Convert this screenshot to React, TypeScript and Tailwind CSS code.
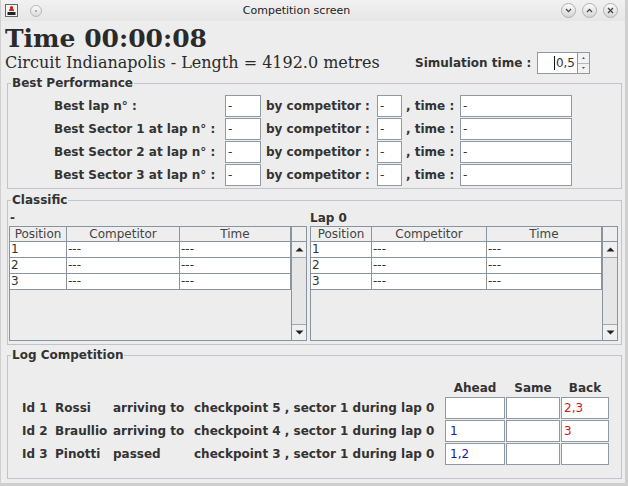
import React from "react";

function TitleBtn({ children }: { children: React.ReactNode }) {
  return (
    <div className="w-[15px] h-[15px] rounded-full border border-[#b0b0b0] bg-gradient-to-b from-[#fbfbfb] to-[#d6d6d6] flex items-center justify-center">
      {children}
    </div>
  );
}

function Field({ w, text, cls = "" }: { w: string; text?: string; cls?: string }) {
  return (
    <div className={`${w} h-[22px] bg-white border border-[#8f9aa5] flex items-center pl-[2px] text-[12px] ${cls}`}>
      {text}
    </div>
  );
}

function Group({ title, className = "", children }: { title: string; className?: string; children: React.ReactNode }) {
  return (
    <fieldset className={`border border-[#bfc5cb] ${className}`}>
      <legend className="ml-[3px] px-[1px] text-[12px] font-bold leading-[14px] text-[#333]">{title}</legend>
      {children}
    </fieldset>
  );
}

function Arrow({ up }: { up?: boolean }) {
  return (
    <svg width="9" height="5" viewBox="0 0 9 5">
      {up ? <path d="M0.5 4.5 L4.5 0.5 L8.5 4.5 Z" fill="#222" /> : <path d="M0.5 0.5 L4.5 4.5 L8.5 0.5 Z" fill="#222" />}
    </svg>
  );
}

function Pane({ cols, width }: { cols: number[]; width: string }) {
  const heads = ["Position", "Competitor", "Time"];
  const rows = [["1", "---", "---"], ["2", "---", "---"], ["3", "---", "---"]];
  return (
    <div className={`${width} h-[115px] border border-[#8a949e] flex`}>
      <div className="flex-1 flex flex-col">
        <div className="flex h-[15px] border-b border-[#8a949e] bg-[#eeeeee]">
          {heads.map((h, i) => (
            <div
              key={h}
              style={{ width: cols[i] }}
              className="h-full border-r border-[#8a949e] text-center text-[12px] leading-[14px] text-[#444]"
            >
              {h}
            </div>
          ))}
        </div>
        {rows.map((r) => (
          <div key={r[0]} className="flex h-[16px] border-b border-[#8a949e] bg-white">
            {r.map((c, i) => (
              <div
                key={i}
                style={{ width: cols[i] }}
                className="h-full border-r border-[#8a949e] pl-[1px] text-[12px] leading-[15px] text-[#333]"
              >
                {c}
              </div>
            ))}
          </div>
        ))}
      </div>
      <div className="w-[15px] flex flex-col border-l border-[#8a949e]">
        <div className="h-[15px] border-b border-[#8a949e] bg-[#eeeeee]" />
        <div className="h-[16px] border-b border-[#a0a8b0] bg-[#f0f0f0] flex items-center justify-center">
          <Arrow up />
        </div>
        <div className="flex-1 bg-[#e6e6e6]" />
        <div className="h-[16px] border-t border-[#a0a8b0] bg-[#f0f0f0] flex items-center justify-center">
          <Arrow />
        </div>
      </div>
    </div>
  );
}

function LogRow({ id, name, action, cp, ahead, same, back }: { id: string; name: string; action: string; cp: string; ahead: string; same: string; back: string }) {
  return (
    <div className="flex items-center h-[22px] pl-[14px] text-[12px] font-bold text-[#333]">
      <span className="w-[33px] whitespace-nowrap">{id}</span>
      <span className="w-[58px] whitespace-nowrap">{name}</span>
      <span className="w-[81px] whitespace-nowrap">{action}</span>
      <span className="w-[251px] whitespace-nowrap">{cp}</span>
      <div className="flex gap-[1px]">
        <Field w="w-[60px]" text={ahead} cls="font-normal text-[#1a1aa0] pl-[4px]" />
        <Field w="w-[54px]" text={same} cls="font-normal text-[#333]" />
        <Field w="w-[48px]" text={back} cls="font-normal text-[#d01818] pl-[1px]" />
      </div>
    </div>
  );
}

export default function App() {
  const best = [
    "Best lap n° :",
    "Best Sector 1 at lap n° :",
    "Best Sector 2 at lap n° :",
    "Best Sector 3 at lap n° :",
  ];
  return (
    <div className="w-[628px] h-[486px] bg-[#ededed] flex flex-col overflow-hidden border-l border-r-[3px] border-b-[3px] border-[#cfcfcf] font-['DejaVu_Sans',sans-serif] text-[#333]">
      {/* Title bar */}
      <div className="h-[21px] shrink-0 flex items-center bg-gradient-to-b from-[#f1f1f1] to-[#e6e6e6]">
        <div className="ml-[4px] w-[13px] h-[13px] flex items-center justify-center">
          <svg width="13" height="13" viewBox="0 0 13 13">
            <rect x="0.5" y="0.5" width="12" height="12" fill="#f4f4f4" stroke="#666" />
            <path d="M4 7 C4 3 9 3 9 7 Z" fill="#c0281c" />
            <circle cx="6.5" cy="3.5" r="1.6" fill="#c0281c" />
            <rect x="2.5" y="8" width="8" height="3" fill="#222" />
          </svg>
        </div>
        <div className="ml-[12px] w-[12px] h-[12px] rounded-full border border-[#b8b8b8] bg-gradient-to-b from-[#fbfbfb] to-[#dadada] flex items-center justify-center">
          <div className="w-[2px] h-[2px] rounded-full bg-[#999]" />
        </div>
        <div className="flex-1 text-center text-[11px] text-[#222] pr-[10px] pt-[1px]">Competition screen</div>
        <div className="flex gap-[6px] mr-[7px]">
          <TitleBtn>
            <svg width="7" height="5" viewBox="0 0 7 5">
              <path d="M1 1 L3.5 3.6 L6 1" stroke="#444" strokeWidth="1.3" fill="none" />
            </svg>
          </TitleBtn>
          <TitleBtn>
            <svg width="7" height="5" viewBox="0 0 7 5">
              <path d="M1 4 L3.5 1.4 L6 4" stroke="#444" strokeWidth="1.3" fill="none" />
            </svg>
          </TitleBtn>
          <TitleBtn>
            <svg width="7" height="7" viewBox="0 0 7 7">
              <path d="M1 1 L6 6 M6 1 L1 6" stroke="#444" strokeWidth="1.3" fill="none" />
            </svg>
          </TitleBtn>
        </div>
      </div>

      {/* Time */}
      <div className="h-[29px] shrink-0 pl-[4px] whitespace-nowrap font-['DejaVu_Serif',serif] font-bold text-[25px] leading-[35px] text-[#2a2a2a]">
        Time 00:00:08
      </div>

      {/* Circuit row */}
      <div className="h-[26px] shrink-0 flex items-center">
        <span className="w-[414px] pl-[4px] font-['DejaVu_Serif',serif] text-[16px] text-[#2a2a2a] whitespace-nowrap">
          Circuit Indianapolis - Length = 4192.0 metres
        </span>
        <span className="w-[122px] text-[12px] font-bold text-[#333] whitespace-nowrap">Simulation time :</span>
        <div className="flex h-[22px]">
          <div className="w-[41px] h-full bg-white border border-[#8f9aa5] flex items-center justify-end pr-[2px] text-[12px] text-[#333]">
            <span className="w-[1px] h-[14px] bg-[#111] mr-[1px]" />
            0,5
          </div>
          <div className="w-[12px] h-full flex flex-col border border-l-0 border-[#8f9aa5]">
            <div className="flex-1 border-b border-[#b0b8c0] bg-[#f2f2f2] flex items-center justify-center">
              <svg width="3" height="2" viewBox="0 0 3 2"><path d="M0 2 L1.5 0 L3 2 Z" fill="#555" /></svg>
            </div>
            <div className="flex-1 bg-[#f2f2f2] flex items-center justify-center">
              <svg width="3" height="2" viewBox="0 0 3 2"><path d="M0 0 L1.5 2 L3 0 Z" fill="#555" /></svg>
            </div>
          </div>
        </div>
      </div>

      {/* Best Performance */}
      <Group title="Best Performance" className="ml-[6px] w-[615px] shrink-0">
        <div className="pt-[5px] pb-[2px] pl-[46px] flex flex-col gap-[1px]">
          {best.map((b) => (
            <div key={b} className="flex items-center h-[22px] text-[12px] font-bold text-[#333]">
              <span className="w-[171px] whitespace-nowrap">{b}</span>
              <Field w="w-[36px]" text="-" cls="font-normal" />
              <span className="w-[116px] pl-[5px] whitespace-nowrap">by competitor :</span>
              <Field w="w-[25px]" text="-" cls="font-normal" />
              <span className="w-[58px] pl-[4px] whitespace-nowrap">, time :</span>
              <Field w="w-[112px]" text="-" cls="font-normal" />
            </div>
          ))}
        </div>
      </Group>

      {/* Classific */}
      <Group title="Classific" className="ml-[6px] mt-[4px] w-[615px] shrink-0">
        <div className="pt-[3px] pb-[3px] pl-[1px] flex gap-[3px]">
          <div className="flex flex-col">
            <div className="h-[16px] pl-[1px] text-[12px] font-bold leading-[16px] text-[#333]">-</div>
            <Pane cols={[57, 113, 111]} width="w-[298px]" />
          </div>
          <div className="flex flex-col">
            <div className="h-[16px] text-[12px] font-bold leading-[16px] text-[#333]">Lap 0</div>
            <Pane cols={[61, 115, 115]} width="w-[308px]" />
          </div>
        </div>
      </Group>

      {/* Log Competition */}
      <Group title="Log Competition" className="ml-[6px] mt-[3px] w-[615px] shrink-0">
        <div className="pt-[18px] pb-[13px] flex flex-col">
          <div className="h-[17px] flex text-[12px] font-bold text-[#333] leading-[16px]">
            <div className="w-[437px]" />
            <div className="w-[60px] text-center">Ahead</div>
            <div className="w-[1px]" />
            <div className="w-[54px] text-center">Same</div>
            <div className="w-[1px]" />
            <div className="w-[48px] text-center">Back</div>
          </div>
          <div className="flex flex-col gap-[1px]">
            <LogRow id="Id 1" name="Rossi" action="arriving to" cp="checkpoint 5 , sector 1 during lap 0" ahead="" same="" back="2,3" />
            <LogRow id="Id 2" name="Braullio" action="arriving to" cp="checkpoint 4 , sector 1 during lap 0" ahead="1" same="" back="3" />
            <LogRow id="Id 3" name="Pinotti" action="passed" cp="checkpoint 3 , sector 1 during lap 0" ahead="1,2" same="" back="" />
          </div>
        </div>
      </Group>
    </div>
  );
}
